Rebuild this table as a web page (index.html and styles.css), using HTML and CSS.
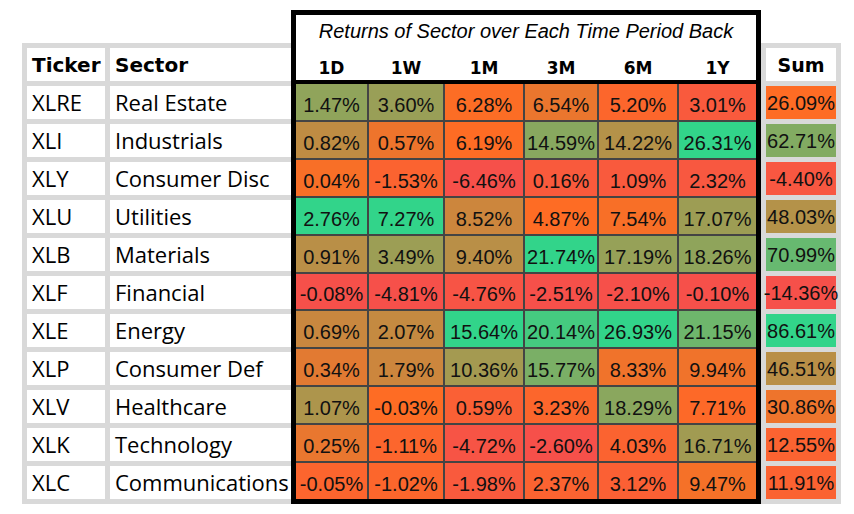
FILE: index.html
```html
<!DOCTYPE html>
<html>
<head>
<meta charset="utf-8">
<link rel="stylesheet" href="styles.css">
</head>
<body>
<div class="page">
  <div class="names">
    <div class="hcell">Ticker</div><div class="hcell">Sector</div>
    <div class="ncell">XLRE</div><div class="ncell">Real Estate</div>
    <div class="ncell">XLI</div><div class="ncell">Industrials</div>
    <div class="ncell">XLY</div><div class="ncell">Consumer Disc</div>
    <div class="ncell">XLU</div><div class="ncell">Utilities</div>
    <div class="ncell">XLB</div><div class="ncell">Materials</div>
    <div class="ncell">XLF</div><div class="ncell">Financial</div>
    <div class="ncell">XLE</div><div class="ncell">Energy</div>
    <div class="ncell">XLP</div><div class="ncell">Consumer Def</div>
    <div class="ncell">XLV</div><div class="ncell">Healthcare</div>
    <div class="ncell">XLK</div><div class="ncell">Technology</div>
    <div class="ncell">XLC</div><div class="ncell">Communications</div>
  </div>

  <div class="returns">
    <div class="title">Returns of Sector over Each Time Period Back</div>
    <div class="heads">
      <div>1D</div><div>1W</div><div>1M</div><div>3M</div><div>6M</div><div>1Y</div>
    </div>
    <div class="grid">
      <div class="v" data-c="0">1.47%</div><div class="v" data-c="1">3.60%</div><div class="v" data-c="2">6.28%</div><div class="v" data-c="3">6.54%</div><div class="v" data-c="4">5.20%</div><div class="v" data-c="5">3.01%</div>
      <div class="v" data-c="0">0.82%</div><div class="v" data-c="1">0.57%</div><div class="v" data-c="2">6.19%</div><div class="v" data-c="3">14.59%</div><div class="v" data-c="4">14.22%</div><div class="v" data-c="5">26.31%</div>
      <div class="v" data-c="0">0.04%</div><div class="v" data-c="1">-1.53%</div><div class="v" data-c="2">-6.46%</div><div class="v" data-c="3">0.16%</div><div class="v" data-c="4">1.09%</div><div class="v" data-c="5">2.32%</div>
      <div class="v" data-c="0">2.76%</div><div class="v" data-c="1">7.27%</div><div class="v" data-c="2">8.52%</div><div class="v" data-c="3">4.87%</div><div class="v" data-c="4">7.54%</div><div class="v" data-c="5">17.07%</div>
      <div class="v" data-c="0">0.91%</div><div class="v" data-c="1">3.49%</div><div class="v" data-c="2">9.40%</div><div class="v" data-c="3">21.74%</div><div class="v" data-c="4">17.19%</div><div class="v" data-c="5">18.26%</div>
      <div class="v" data-c="0">-0.08%</div><div class="v" data-c="1">-4.81%</div><div class="v" data-c="2">-4.76%</div><div class="v" data-c="3">-2.51%</div><div class="v" data-c="4">-2.10%</div><div class="v" data-c="5">-0.10%</div>
      <div class="v" data-c="0">0.69%</div><div class="v" data-c="1">2.07%</div><div class="v" data-c="2">15.64%</div><div class="v" data-c="3">20.14%</div><div class="v" data-c="4">26.93%</div><div class="v" data-c="5">21.15%</div>
      <div class="v" data-c="0">0.34%</div><div class="v" data-c="1">1.79%</div><div class="v" data-c="2">10.36%</div><div class="v" data-c="3">15.77%</div><div class="v" data-c="4">8.33%</div><div class="v" data-c="5">9.94%</div>
      <div class="v" data-c="0">1.07%</div><div class="v" data-c="1">-0.03%</div><div class="v" data-c="2">0.59%</div><div class="v" data-c="3">3.23%</div><div class="v" data-c="4">18.29%</div><div class="v" data-c="5">7.71%</div>
      <div class="v" data-c="0">0.25%</div><div class="v" data-c="1">-1.11%</div><div class="v" data-c="2">-4.72%</div><div class="v" data-c="3">-2.60%</div><div class="v" data-c="4">4.03%</div><div class="v" data-c="5">16.71%</div>
      <div class="v" data-c="0">-0.05%</div><div class="v" data-c="1">-1.02%</div><div class="v" data-c="2">-1.98%</div><div class="v" data-c="3">2.37%</div><div class="v" data-c="4">3.12%</div><div class="v" data-c="5">9.47%</div>
    </div>
  </div>

  <div class="sums">
    <div class="shead">Sum</div>
    <div class="v s" data-c="6">26.09%</div>
    <div class="v s" data-c="6">62.71%</div>
    <div class="v s" data-c="6">-4.40%</div>
    <div class="v s" data-c="6">48.03%</div>
    <div class="v s" data-c="6">70.99%</div>
    <div class="v s" data-c="6">-14.36%</div>
    <div class="v s" data-c="6">86.61%</div>
    <div class="v s" data-c="6">46.51%</div>
    <div class="v s" data-c="6">30.86%</div>
    <div class="v s" data-c="6">12.55%</div>
    <div class="v s" data-c="6">11.91%</div>
  </div>
</div>
<script src="script.js"></script>
</body>
</html>
```

FILE: styles.css
```css
* { box-sizing: border-box; }

body {
  margin: 0;
  background: #ffffff;
  color: #000;
}

.page {
  display: flex;
  align-items: flex-start;
  padding: 10px 0 0 22px;
}

/* left: ticker / sector table */
.names {
  margin-top: 33px;
  background: #d9d9d9;
  padding: 5px 0 5px 5px;
  display: grid;
  grid-template-columns: 78px 181px;
  grid-auto-rows: 33px;
  gap: 5px;
}

.names > div {
  background: #fff;
  padding-left: 5px;
  display: flex;
  align-items: center;
  white-space: nowrap;
  overflow: hidden;
}

.hcell {
  font-family: "DejaVu Sans", sans-serif;
  font-weight: 700;
  font-size: 20px;
}

.ncell {
  font-family: "Open Sans", sans-serif;
  font-size: 22px;
  padding-bottom: 1px;
}

/* middle: returns heat map */
.returns {
  width: 470px;
  height: 494px;
  border: 5px solid #000;
  background: #fff;
  display: flex;
  flex-direction: column;
}

.title {
  height: 30px;
  line-height: 30px;
  padding-top: 1px;
  text-align: center;
  font-family: "Liberation Sans", Arial, sans-serif;
  font-style: italic;
  font-size: 20px;
  white-space: nowrap;
}

.heads {
  height: 39px;
  border-bottom: 4px solid #000;
  display: grid;
  grid-template-columns: 71px 74px 78px 72px 78px 77px;
  column-gap: 2px;
  align-items: end;
  padding-bottom: 2px;
  font-family: "DejaVu Sans", sans-serif;
  font-weight: 700;
  font-size: 17px;
  line-height: 20px;
  text-align: center;
}

.grid {
  flex: 1;
  display: grid;
  grid-template-columns: 71px 74px 78px 72px 78px 77px;
  grid-template-rows: repeat(11, 1fr);
  gap: 2px;
  background: #444;
}

.v {
  display: flex;
  align-items: flex-end;
  justify-content: center;
  padding-bottom: 3px;
  background: #fd6b25;
  font-family: "Liberation Sans", Arial, sans-serif;
  font-size: 20px;
  color: #111;
  white-space: nowrap;
}

/* right: sum column */
.sums {
  margin-top: 33px;
  background: #d9d9d9;
  padding: 5px;
  display: grid;
  grid-template-columns: 70px;
  grid-auto-rows: 33px;
  gap: 5px;
}

.shead {
  background: #fff;
  display: flex;
  align-items: center;
  justify-content: center;
  font-family: "DejaVu Sans", sans-serif;
  font-weight: 700;
  font-size: 19px;
}

.v.s {
  padding-bottom: 4px;
}
```

FILE: script.js
```js
// Per-column three-point colour scale: red (min) -> orange (mid) -> green (max)
var MID = { 0: -0.04, 1: 0, 2: 6.2, 3: 4.87, 4: 7.0, 5: 8.7, 6: 26 };
var RED = [246, 80, 74], ORANGE = [254, 108, 36], GREEN = [50, 212, 138];

function mix(a, b, t) {
  t = Math.max(0, Math.min(1, t));
  return a.map(function (v, i) { return Math.round(v + (b[i] - v) * t); });
}

var groups = {};
document.querySelectorAll('.v').forEach(function (el) {
  var c = el.getAttribute('data-c');
  (groups[c] = groups[c] || []).push(el);
});

Object.keys(groups).forEach(function (c) {
  var els = groups[c];
  var vals = els.map(function (e) { return parseFloat(e.textContent); });
  var min = Math.min.apply(null, vals), max = Math.max.apply(null, vals);
  var mid = MID[c];
  els.forEach(function (e, i) {
    var v = vals[i], col;
    if (v >= mid) col = mix(ORANGE, GREEN, (v - mid) / (max - mid));
    else col = mix(ORANGE, RED, (mid - v) / (mid - min));
    e.style.background = 'rgb(' + col.join(',') + ')';
  });
});
```
